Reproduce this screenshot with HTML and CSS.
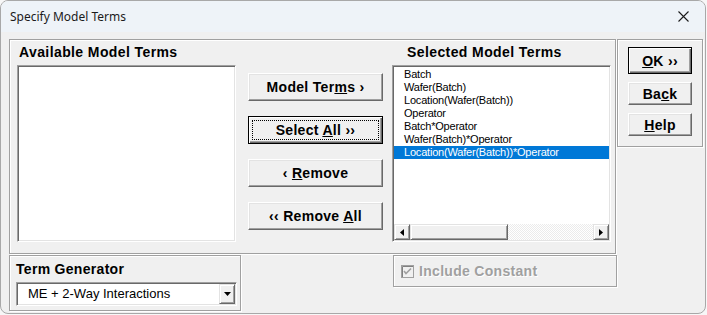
FILE: index.html
```html
<!DOCTYPE html>
<html>

<head>
  <meta http-equiv="Content-Type" content="text/html; charset=utf-8" />
  <title>Specify Model Terms</title>
  <link rel="stylesheet" href="styles.css">
</head>

<body>
  <div class="window">
    <div class="titlebar">
      <span class="title">Specify Model Terms</span>
      <svg class="close" width="11" height="11" viewBox="0 0 11 11">
        <path d="M0.5 0.5 L10.5 10.5 M10.5 0.5 L0.5 10.5" stroke="#1b1b1b" stroke-width="1.1" fill="none" />
      </svg>
    </div>

    <div class="client">
      <div class="top-row">
        <div class="frame terms-frame">
          <div class="pane">
            <div class="caption">Available Model Terms</div>
            <div class="listbox"></div>
          </div>

          <div class="btn-col">
            <div class="btn"><span class="label">Model Ter<u>m</u>s ›</span></div>
            <div class="btn default focused"><span class="label">Select <u>A</u>ll ››</span></div>
            <div class="btn"><span class="label">‹ <u>R</u>emove</span></div>
            <div class="btn"><span class="label">‹‹ Remove <u>A</u>ll</span></div>
          </div>

          <div class="pane selected-pane">
            <div class="caption">Selected Model Terms</div>
            <div class="listbox">
              <ul class="items">
                <li>Batch</li>
                <li>Wafer(Batch)</li>
                <li>Location(Wafer(Batch))</li>
                <li>Operator</li>
                <li>Batch*Operator</li>
                <li>Wafer(Batch)*Operator</li>
                <li class="sel">Location(Wafer(Batch))*Operator</li>
              </ul>
              <div class="hscroll">
                <div class="sb-btn">
                  <svg width="4" height="7" viewBox="0 0 4 7"><polygon points="4,0 4,7 0,3.5" fill="#000" /></svg>
                </div>
                <div class="sb-thumb"></div>
                <div class="sb-track"></div>
                <div class="sb-btn">
                  <svg width="4" height="7" viewBox="0 0 4 7"><polygon points="0,0 0,7 4,3.5" fill="#000" /></svg>
                </div>
              </div>
            </div>
          </div>
        </div>

        <div class="frame action-frame">
          <div class="btn small default ok"><span class="label"><u>O</u>K ››</span></div>
          <div class="btn small"><span class="label">Ba<u>c</u>k</span></div>
          <div class="btn small"><span class="label"><u>H</u>elp</span></div>
        </div>
      </div>

      <div class="bottom-row">
        <div class="frame gen-frame">
          <div class="caption">Term Generator</div>
          <div class="combo">
            <span class="combo-text">ME + 2-Way Interactions</span>
            <div class="drop">
              <svg width="7" height="4" viewBox="0 0 7 4"><polygon points="0,0 7,0 3.5,4" fill="#000" /></svg>
            </div>
          </div>
        </div>

        <div class="frame const-frame">
          <svg class="check" width="13" height="13" viewBox="0 0 13 13">
            <rect x="0.5" y="0.5" width="12" height="12" fill="#f0f0f0" stroke="#a0a0a0" />
            <path d="M1.5 12 V1.5 H12" stroke="#808080" fill="none" />
            <path d="M3 6 L5 8.5 L10 3.5" stroke="#a0a0a0" stroke-width="1.6" fill="none" />
          </svg>
          <span class="disabled">Include Constant</span>
        </div>
      </div>
    </div>
  </div>
</body>

</html>
```

FILE: styles.css
```css
* {
  box-sizing: border-box;
}

html,
body {
  margin: 0;
  background: #f7f7f7;
}

.window {
  width: 706px;
  height: 314px;
  border: 1px solid #a8a8a8;
  border-radius: 8px;
  background: #f0f0f0;
  overflow: hidden;
  font-family: "Liberation Sans", Arial, sans-serif;
  color: #000;
}

.titlebar {
  height: 31px;
  background: #eef3f8;
  display: flex;
  align-items: center;
  padding: 0 10px 0 9px;
}

.title {
  font-family: "Noto Sans", "Open Sans", sans-serif;
  font-size: 12px;
  color: #1b1b1b;
  flex: 1;
}

.close {
  margin-right: 6px;
}

.client {
  padding: 7px 0 0 8px;
}

.top-row,
.bottom-row {
  display: flex;
  align-items: flex-start;
}

.bottom-row {
  margin-top: 1px;
}

/* etched frames */
.frame {
  border: 1px solid #a0a0a0;
  box-shadow: inset 1px 1px 0 #fff, 1px 1px 0 #fff;
}

.terms-frame {
  width: 607px;
  height: 215px;
  padding: 4px 0 0 7px;
  display: flex;
  align-items: flex-start;
}

.pane {
  width: 219px;
  display: flex;
  flex-direction: column;
  gap: 5px;
}

.caption {
  height: 16px;
  line-height: 16px;
  font-size: 14px;
  font-weight: bold;
  letter-spacing: 0.4px;
  padding-left: 2px;
  white-space: nowrap;
}

.selected-pane .caption {
  padding-left: 15px;
}

.listbox {
  height: 177px;
  background: #fff;
  border: 1px solid;
  border-color: #a0a0a0 #fff #fff #a0a0a0;
  box-shadow: inset 1px 1px 0 #696969, inset -1px -1px 0 #e3e3e3;
  padding: 1px;
  display: flex;
  flex-direction: column;
}

.items {
  list-style: none;
  margin: 0;
  padding: 1px 0 0;
  flex: 1;
}

.items li {
  height: 13px;
  line-height: 13px;
  font-size: 11px;
  letter-spacing: -0.2px;
  padding-left: 10px;
  white-space: nowrap;
}

.items li.sel {
  background: #0078d7;
  color: #fff;
}

.hscroll {
  height: 16px;
  display: flex;
}

.sb-btn {
  width: 16px;
  display: flex;
  align-items: center;
  justify-content: center;
  background: #f0f0f0;
  border: 1px solid;
  border-color: #e3e3e3 #696969 #696969 #e3e3e3;
  box-shadow: inset 1px 1px 0 #fff, inset -1px -1px 0 #a0a0a0;
}

.sb-thumb {
  width: 98px;
  background: #f0f0f0;
  border: 1px solid;
  border-color: #e3e3e3 #696969 #696969 #e3e3e3;
  box-shadow: inset 1px 1px 0 #fff, inset -1px -1px 0 #a0a0a0;
}

.sb-track {
  flex: 1;
  background: repeating-conic-gradient(#fff 0 25%, #ebebeb 0 50%) 0 0 / 2px 2px;
}

/* push buttons */
.btn-col {
  margin: 0 9px 0 12px;
  padding-top: 29px;
  display: flex;
  flex-direction: column;
  gap: 15px;
}

.btn {
  width: 135px;
  height: 28px;
  display: flex;
  align-items: center;
  justify-content: center;
  font-size: 14px;
  font-weight: bold;
  letter-spacing: 0.3px;
  white-space: nowrap;
  background: #f0f0f0;
  border: 1px solid;
  border-color: #fff #696969 #696969 #fff;
  box-shadow: inset -1px -1px 0 #a0a0a0, inset 1px 1px 0 #e3e3e3;
}

.btn.default {
  border: 1px solid #000;
  box-shadow: inset 1px 1px 0 #fff, inset -1px -1px 0 #696969, inset -2px -2px 0 #a0a0a0;
}

.btn.focused .label {
  outline: 1px dotted #000;
  width: calc(100% - 8px);
  height: calc(100% - 8px);
  line-height: 18px;
  text-align: center;
}

.action-frame {
  width: 86px;
  height: 108px;
  margin-left: 1px;
  padding-top: 7px;
  display: flex;
  flex-direction: column;
  align-items: center;
  gap: 8px;
}

.btn.small {
  width: 64px;
  height: 23px;
}

.btn.ok {
  height: 27px;
}

/* bottom row */
.gen-frame {
  width: 232px;
  height: 56px;
  padding: 5px 0 0 6px;
  display: flex;
  flex-direction: column;
  gap: 5px;
}

.gen-frame .caption {
  padding-left: 0;
  letter-spacing: 0.3px;
}

.combo {
  width: 221px;
  height: 24px;
  background: #fff;
  border: 1px solid;
  border-color: #a0a0a0 #fff #fff #a0a0a0;
  box-shadow: inset 1px 1px 0 #696969, inset -1px -1px 0 #e3e3e3;
  padding: 1px 1px 1px 2px;
  display: flex;
  align-items: stretch;
}

.combo-text {
  flex: 1;
  font-size: 13px;
  line-height: 20px;
  padding-left: 9px;
}

.drop {
  width: 16px;
  display: flex;
  align-items: center;
  justify-content: center;
  background: #f0f0f0;
  border: 1px solid;
  border-color: #e3e3e3 #696969 #696969 #e3e3e3;
  box-shadow: inset 1px 1px 0 #fff, inset -1px -1px 0 #a0a0a0;
}

.const-frame {
  width: 224px;
  height: 32px;
  margin-left: 152px;
  padding-left: 7px;
  display: flex;
  align-items: center;
  gap: 5px;
}

.disabled {
  font-size: 14px;
  font-weight: bold;
  letter-spacing: 0.3px;
  color: #a0a0a0;
  text-shadow: 1px 1px 0 #fff;
}
```
